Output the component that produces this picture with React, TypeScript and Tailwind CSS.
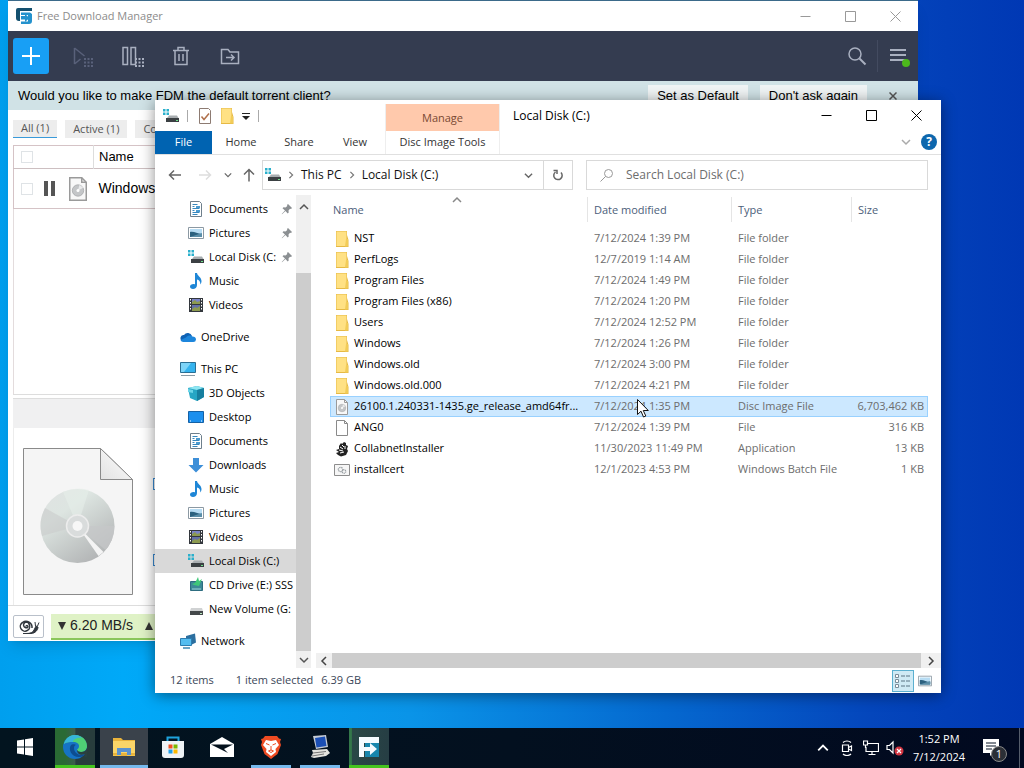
import type { ReactNode } from 'react'
import clsx from 'clsx'

type IconProps = { className?: string }

function FdmLogo({ className }: IconProps) {
  return (
    <svg viewBox="0 0 16 16" className={className}>
      <path d="M2 0h14v3H4v10H3a3 3 0 0 1-3-3V2a2 2 0 0 1 2-2z" fill="#14506f" />
      <path d="M5 4.500h9l2 1.500v7a3 3 0 0 1-3 3H5v-2.500h7V7H5z" fill="#2492cd" />
      <path d="M5 8h4V6l4.500 4L9 14v-2.500H5z" fill="#2492cd" />
    </svg>
  )
}

function DriveIcon({ className }: IconProps) {
  return (
    <svg viewBox="0 0 16 16" className={className}>
      <path d="M0 1h2.500v2.500H0zM3.500 1H6v2.500H3.500zM0 4.500h2.500V7H0zM3.500 4.500H6V7H3.500z" fill="#2ab0cc" />
      <path d="M4 10l2-2.500h8l1.500 2.500z" fill="#a8adb0" />
      <path d="M3 10h13v4H3z" fill="#3b4043" />
      <path d="M13 12h2v1h-2z" fill="#6fe08a" />
    </svg>
  )
}

function VolumeIcon({ className }: IconProps) {
  return (
    <svg viewBox="0 0 16 16" className={className}>
      <path d="M3 7h11l1 3H2z" fill="#d0d2d3" />
      <path d="M2 10h13v4H2z" fill="#44484a" />
      <path d="M12 12h2v1h-2z" fill="#b9e8c0" />
    </svg>
  )
}

function DocumentsIcon({ className }: IconProps) {
  return (
    <svg viewBox="0 0 16 16" className={className}>
      <path d="M2.500.5h9l2 2v13h-11z" fill="#fff" stroke="#6e7f8c" />
      <path d="M4.500 3.500h5M4.500 5.500h2M4.500 7.500h7M4.500 9.500h2M4.500 11.500h7M4.500 13.500h5" stroke="#3787bd" />
      <path d="M8 5h4v2H8zM8 9h4v2H8z" fill="#4b9bd0" />
    </svg>
  )
}

function PicturesIcon({ className }: IconProps) {
  return (
    <svg viewBox="0 0 16 16" className={className}>
      <path d="M.5 2.500h15v11H.5z" fill="#fff" stroke="#8c99a3" />
      <path d="M2 4h12v8H2z" fill="#b7dcf3" />
      <path d="M2 7c4-1 7 2 12 2v3H2z" fill="#2c617f" />
      <path d="M8 10l6-2v4H2z" fill="#5b8ea8" />
    </svg>
  )
}

function MusicIcon({ className }: IconProps) {
  return (
    <svg viewBox="0 0 16 16" className={className}>
      <path d="M7 0h2c.3 3 4.500 4 4.500 8 0 1.500-.5 2.500-1.200 3.500.3-3-1.300-4.500-3.300-5V12c0 2.500-2 4-4 4s-3-1-3-2.500S3.500 11 5.500 11c.6 0 1 .1 1.500.4z" fill="#1f86d6" />
    </svg>
  )
}

function VideosIcon({ className }: IconProps) {
  return (
    <svg viewBox="0 0 16 16" className={className}>
      <path d="M1 1h14v14H1z" fill="#33373d" />
      <path d="M4 2h8v5H4z" fill="#7a83c8" />
      <path d="M4 8h8v6H4z" fill="#6470a8" />
      <path d="M4 5l3-2 2 2 3-1v3H4zM4 12l3-2 2 1 3-2v5H4z" fill="#8c9a50" />
      <path d="M2.500 2v12M13.500 2v12" stroke="#fff" strokeDasharray="1.500 1.500" />
    </svg>
  )
}

function OneDriveIcon({ className }: IconProps) {
  return (
    <svg viewBox="0 0 16 16" className={className}>
      <path d="M4 6a4.500 4.500 0 0 1 8 1l-6 5H3a3 3 0 0 1 1-6z" fill="#0f62b5" />
      <path d="M6 8.500c2-2.500 5-2.500 6.500-1 2 0 3.500 1.200 3.500 3A2.700 2.700 0 0 1 13.300 13H3.200A3.200 3.200 0 0 1 .5 11z" fill="#1d86dc" />
    </svg>
  )
}

function ThisPcIcon({ className }: IconProps) {
  return (
    <svg viewBox="0 0 16 16" className={className}>
      <path d="M.5 1.500h15v10H.5z" fill="#35b3ee" stroke="#2a6e93" />
      <path d="M1 2h10L4 11H1z" fill="#7dd4f8" />
      <path d="M1 14.500h14" stroke="#8a9aa4" />
    </svg>
  )
}

function ObjectsIcon({ className }: IconProps) {
  return (
    <svg viewBox="0 0 16 16" className={className}>
      <path d="M0 3l9-2 7 2v9l-7 4-7-3z" fill="#26a6c4" />
      <path d="M0 3l9-2 7 2-7 2z" fill="#8fe6f2" />
      <path d="M9 5l7-2v9l-7 4z" fill="#167f9f" />
      <path d="M0 4l5 1v3L0 7z" fill="#6ad5e8" />
    </svg>
  )
}

function DesktopIcon({ className }: IconProps) {
  return (
    <svg viewBox="0 0 16 16" className={className}>
      <path d="M.5 2.500h15v11H.5z" fill="#1b8fee" stroke="#1561a5" />
      <path d="M2 12h1M13 12h1" stroke="#fff" />
    </svg>
  )
}

function DownloadsIcon({ className }: IconProps) {
  return (
    <svg viewBox="0 0 16 16" className={className}>
      <path d="M5 1h6v7h4.500L8 15.500.5 8H5z" fill="#3d8fd8" />
    </svg>
  )
}

function CdDriveIcon({ className }: IconProps) {
  return (
    <svg viewBox="0 0 16 16" className={className}>
      <path d="M2.500 4.500h12v9h-12z" fill="#3d8a96" stroke="#2d6d80" />
      <path d="M4 7l3-1 3-6 1 4 3-2-3 7-5-1z" fill="#3fc878" />
      <path d="M4 12h9" stroke="#9fd3da" />
    </svg>
  )
}

function NetworkIcon({ className }: IconProps) {
  return (
    <svg viewBox="0 0 16 16" className={className}>
      <path d="M6 3l9-2.500 1 9L11 12H6z" fill="#2c6f9f" />
      <path d="M.5 5.500h11v7H.5z" fill="#55bdf0" stroke="#2d7db0" />
      <path d="M3 15h7" stroke="#3c87b3" strokeWidth="1.500" />
    </svg>
  )
}

function FolderIcon({ className }: IconProps) {
  return (
    <svg viewBox="0 0 16 16" className={className}>
      <path d="M2 0h11v4l1.500 5v7H2z" fill="#e6b944" />
      <path d="M2.500.5H12.500V15H2.500z" fill="#ffe184" />
      <path d="M12 8h2v7.500h-3z" fill="#f2cc58" />
    </svg>
  )
}

function PageIcon({ className }: IconProps) {
  return (
    <svg viewBox="0 0 16 16" className={className}>
      <path d="M2.500.5h8l3 3v12h-11z" fill="#fff" stroke="#8a8a8a" />
      <path d="M10.500.5v3h3" fill="none" stroke="#8a8a8a" />
    </svg>
  )
}

function DiscIcon({ className }: IconProps) {
  return (
    <svg viewBox="0 0 16 16" className={className}>
      <path d="M2.500.5h8l3 3v12h-11z" fill="#f8f8f8" stroke="#9a9a9a" />
      <path d="M10.500.5v3h3" fill="none" stroke="#9a9a9a" />
      <circle cx="8" cy="9" r="3.800" fill="#c4c6c8" stroke="#a4a6a8" strokeWidth=".5" />
      <path d="M8 9l1-3.800 2.500 2z" fill="#e9eaeb" />
      <circle cx="8" cy="9" r="1" fill="#fff" />
    </svg>
  )
}

function CollabIcon({ className }: IconProps) {
  return (
    <svg viewBox="0 0 16 16" className={className}>
      <path d="M5 5l2-3 1 1 2-2 2 1v2l2 1-1 3 1 2-2 4-5 1.500L4 14l-2-2 3-1-3-2 3-1z" fill="#222" />
      <path d="M6 6l3 2M5 9l4 1M8 4l2 2M6 12l4-1M11 5v3" stroke="#fff" />
    </svg>
  )
}

function BatchIcon({ className }: IconProps) {
  return (
    <svg viewBox="0 0 16 16" className={className}>
      <path d="M.5 2.500h15v11H.5z" fill="#f6f6f6" stroke="#8d8d8d" />
      <circle cx="6.500" cy="7.500" r="2.200" fill="none" stroke="#9aa0a4" strokeWidth="1.300" strokeDasharray="1.400 .6" />
      <circle cx="10" cy="9.500" r="1.800" fill="none" stroke="#9aa0a4" strokeWidth="1.200" strokeDasharray="1.200 .5" />
    </svg>
  )
}

function PinIcon({ className }: IconProps) {
  return (
    <svg viewBox="0 0 12 12" className={className}>
      <path d="M7 1l4 4-1 1-1-.3L7.500 7.500l.2 2-1 1L4.500 8 1 11.300.7 11 4 7.500 1.500 5.300l1-1 2 .2L6.300 3 6 2z" fill="#8b8f92" />
    </svg>
  )
}

function Chevron({ className, d = 'M1 3l4 4 4-4' }: IconProps & { d?: string }) {
  return (
    <svg viewBox="0 0 10 10" fill="none" stroke="currentColor" strokeWidth="1.500" className={className}>
      <path d={d} />
    </svg>
  )
}

const UP = 'M1 7l4-4 4 4'
const LEFT = 'M7 1L3 5l4 4'
const RIGHT = 'M3 1l4 4-4 4'

function WindowButtons({ className }: IconProps) {
  const shapes = [
    { label: 'Minimize', d: 'M.5 5.500h10' },
    { label: 'Maximize', d: 'M.5.5h10v10H.5z' },
    { label: 'Close', d: 'M.5.5l10 10M10.500.5l-10 10' },
  ]
  return (
    <div className={clsx('flex h-[30px]', className)}>
      {shapes.map(({ label, d }) => (
        <button key={label} aria-label={label} className="grid w-[45px] place-items-center">
          <svg viewBox="0 0 11 11" fill="none" stroke="currentColor" className="size-[11px]">
            <path d={d} />
          </svg>
        </button>
      ))}
    </div>
  )
}

function DiscPreview() {
  return (
    <svg viewBox="0 0 110 147" className="h-[147px] w-[110px] shrink-0">
      <defs>
        <linearGradient id="disc" x1="0" y1="0" x2=".7" y2="1">
          <stop offset="0" stopColor="#e0e2e2" />
          <stop offset=".35" stopColor="#dde5e1" />
          <stop offset="1" stopColor="#b2b4b5" />
        </linearGradient>
        <linearGradient id="fold" x1="0" y1="1" x2="1" y2="0">
          <stop offset="0" stopColor="#e2e2e2" />
          <stop offset="1" stopColor="#fff" />
        </linearGradient>
      </defs>
      <path d="M.5.5h77l32 31v115H.5z" fill="#f5f5f5" stroke="#8a8a8a" />
      <path d="M77.500.5v31h32z" fill="url(#fold)" stroke="#8a8a8a" />
      <circle cx="54.500" cy="78" r="37" fill="url(#disc)" />
      <path d="M54.500 78L22 60a37 37 0 0 0-3 28z" fill="#c9cbcc" opacity=".6" />
      <path d="M54.500 78h37a37 37 0 0 1-9 24z" fill="#c6c8c9" opacity=".7" />
      <path d="M54.500 78l26 26-5 4z" fill="#f4f4f4" />
      <path d="M54.500 78L40 44a37 37 0 0 1 26-2z" fill="#e6efea" opacity=".6" />
      <circle cx="54.500" cy="78" r="11" fill="#d9dcdc" stroke="#ececec" strokeWidth="1.500" />
      <circle cx="54.500" cy="78" r="5" fill="#f7f7f7" />
    </svg>
  )
}

function ToolButton({ label, className, children }: { label: string; className?: string; children: ReactNode }) {
  return (
    <button aria-label={label} className={clsx('grid size-9 place-items-center', className)}>
      <svg viewBox="0 0 24 24" fill="none" stroke="currentColor" strokeWidth="1.500" className="size-6">
        {children}
      </svg>
    </button>
  )
}

function DownloadManager() {
  return (
    <section className="absolute top-0 right-[106px] bottom-[87px] left-2 flex flex-col border-t border-[#3b6a8a] bg-white font-['Liberation_Sans',sans-serif] shadow-lg">
      <header className="flex h-[30px] shrink-0 items-center pl-2">
        <FdmLogo className="size-4" />
        <h1 className="ml-[5px] grow font-['Open_Sans',sans-serif] text-[11px] text-[#8c8c8c]">Free Download Manager</h1>
        <WindowButtons className="text-[#999]" />
      </header>

      <div className="flex h-[50px] shrink-0 items-center bg-[#343c50] pr-[2px] pl-[5px] text-[#a9b0c0]">
        <button aria-label="Add download" className="grid size-9 place-items-center rounded-[3px] bg-[#189ff5] text-white">
          <svg viewBox="0 0 18 18" stroke="currentColor" strokeWidth="2" className="size-[18px]">
            <path d="M9 0v18M0 9h18" />
          </svg>
        </button>
        <div className="ml-4 flex grow gap-[13px]">
          <ToolButton label="Start all" className="text-[#59617a]">
            <path d="M3.500 4v16M3.500 4l10 8M3.500 20l6-5" />
            <path d="M13 15h10M13 18.500h10M13 22h10" strokeWidth="2" strokeDasharray="2 1.500" />
          </ToolButton>
          <ToolButton label="Pause all">
            <path d="M3 3.500h4.500v17H3zM11 3.500h4.500v17H11z" />
            <path d="M15 15h9M15 18.500h9M15 22h9" strokeWidth="2" strokeDasharray="2 1.500" />
          </ToolButton>
          <ToolButton label="Delete">
            <path d="M4 6.500h16M9 6V3.500h6V6M6 7v13.500h12V7M10 10v7M14 10v7" />
          </ToolButton>
          <ToolButton label="Move to folder">
            <path d="M3.500 19.500v-14H10l2 2.500h8.500v11.500zM8 13.500h8M13 10.500l3 3-3 3" />
          </ToolButton>
        </div>
        <ToolButton label="Search">
          <circle cx="10" cy="10" r="6" />
          <path d="M14.500 14.500l6 6" strokeWidth="2" />
        </ToolButton>
        <div className="ml-[2px] h-8 w-px bg-[#434b60]" />
        <button aria-label="Menu" className="ml-[2px] grid size-9 place-items-center">
          <svg viewBox="0 0 24 24" className="size-6">
            <path d="M4 6h16M4 11h16M4 16h16" stroke="currentColor" strokeWidth="2" />
            <circle cx="20" cy="19" r="4" fill="#4cb81c" />
          </svg>
        </button>
      </div>

      <div className="flex h-[29px] shrink-0 items-center bg-[#d0e2e6] pr-[13px] pl-[10px] text-[13px]">
        <p className="grow">Would you like to make FDM the default torrent client?</p>
        <button className="h-[22px] bg-[#f0f4f5] px-[9px]">Set as Default</button>
        <button className="ml-3 h-[22px] bg-[#f0f4f5] px-[9px]">Don't ask again</button>
        <button aria-label="Dismiss" className="ml-[14px] grid w-6 place-items-center text-[#555]">
          <svg viewBox="0 0 8 8" stroke="currentColor" strokeWidth="1.500" className="size-2">
            <path d="M.5.5l7 7M7.500.5l-7 7" />
          </svg>
        </button>
      </div>

      <div className="mt-[10px] ml-[5px] flex gap-2 font-['Open_Sans',sans-serif] text-[11px] text-[#555]">
        <button className="h-[18px] border-b border-[#3a9ad9] bg-[#ededed] px-2">All (1)</button>
        <button className="h-[18px] bg-[#ededed] px-2">Active (1)</button>
        <button className="h-[18px] w-20 bg-[#ededed] px-2 text-left">Co</button>
      </div>

      <table className="mt-[7px] ml-[5px] table-fixed border border-[#d5c3c6] text-[14px]">
        <thead>
          <tr className="h-[23px] border-b border-[#cdbfc1] text-left">
            <th className="w-20 py-0 pl-[7px]">
              <input type="checkbox" aria-label="Select all" className="block size-3 appearance-none border border-[#dfe3e6]" />
            </th>
            <th className="border-l border-[#ddd] py-0 pl-[5px] text-[13px] font-normal">Name</th>
          </tr>
        </thead>
        <tbody>
          <tr className="h-10">
            <td className="pl-[7px]">
              <div className="flex items-center">
                <input type="checkbox" aria-label="Select Windows" className="size-3 appearance-none border border-[#dfe3e6]" />
                <button aria-label="Pause" className="ml-[11px] flex gap-[3px]">
                  <span className="h-[15px] w-1 bg-[#555]" />
                  <span className="h-[15px] w-1 bg-[#555]" />
                </button>
                <DiscIcon className="ml-[11px] size-6" />
              </div>
            </td>
            <td className="pl-[5px]">Windows</td>
          </tr>
        </tbody>
      </table>

      <div className="ml-[5px] grow border-l border-[#e3dcdd]" />
      <div className="mx-[5px] h-[5px] border-y border-[#ddd]" />
      <div className="mx-[5px] h-[29px] bg-[#f0f0f1]" />
      <div className="ml-[5px] flex h-[177px] items-center gap-5 border-l border-[#ececec] pt-[10px] pl-[9px]">
        <DiscPreview />
        <div className="flex h-full flex-col gap-16 pt-[40px]">
          <span className="size-3 border border-[#3a8ad0]" />
          <span className="size-3 border border-[#3a8ad0]" />
        </div>
      </div>
      <footer className="flex h-9 shrink-0 items-center border-t border-[#ddd] pt-[6px] pl-[5px]">
        <button aria-label="Snail mode" className="grid h-[23px] w-[31px] place-items-center rounded-[2px] border border-[#b9c0ca]">
          <svg viewBox="0 0 22 16" fill="none" stroke="#30363d" strokeWidth="1.500" className="h-4 w-[22px]">
            <path d="M8 7.500a1 1 0 1 1 1.500 1A2.800 2.800 0 1 1 11 5 4.700 4.700 0 1 1 4.500 3.500 6 6 0 0 1 14 9" />
            <path d="M5 14.500c6 0 9 0 11-3.500l2-4 2 1c0 3-3 6.500-7 6.500zM17.500 7l-.5-4M19.500 7l1.500-3.500" fill="#30363d" strokeWidth="1" />
          </svg>
        </button>
        <div className="ml-[7px] flex h-[26px] grow items-center border-b-2 border-[#8ac65a] bg-[#dff2c6] pl-[7px] text-[14px] text-[#222]">
          <svg viewBox="0 0 8 8" className="size-2"><path d="M0 0h8L4 8z" fill="#333" /></svg>
          <span className="ml-1">6.20 MB/s</span>
          <svg viewBox="0 0 8 8" className="ml-3 size-2"><path d="M0 8h8L4 0z" fill="#333" /></svg>
        </div>
      </footer>
    </section>
  )
}

type NavItem = { label: string; icon: (p: IconProps) => ReactNode; root?: boolean; pinned?: boolean; active?: boolean }

const navGroups: NavItem[][] = [
  [
    { label: 'Documents', icon: DocumentsIcon, pinned: true },
    { label: 'Pictures', icon: PicturesIcon, pinned: true },
    { label: 'Local Disk (C:', icon: DriveIcon, pinned: true },
    { label: 'Music', icon: MusicIcon },
    { label: 'Videos', icon: VideosIcon },
  ],
  [{ label: 'OneDrive', icon: OneDriveIcon, root: true }],
  [
    { label: 'This PC', icon: ThisPcIcon, root: true },
    { label: '3D Objects', icon: ObjectsIcon },
    { label: 'Desktop', icon: DesktopIcon },
    { label: 'Documents', icon: DocumentsIcon },
    { label: 'Downloads', icon: DownloadsIcon },
    { label: 'Music', icon: MusicIcon },
    { label: 'Pictures', icon: PicturesIcon },
    { label: 'Videos', icon: VideosIcon },
    { label: 'Local Disk (C:)', icon: DriveIcon, active: true },
    { label: 'CD Drive (E:) SSS', icon: CdDriveIcon },
    { label: 'New Volume (G:', icon: VolumeIcon },
  ],
  [{ label: 'Network', icon: NetworkIcon, root: true }],
]

const files = [
  { name: 'NST', date: '7/12/2024 1:39 PM', type: 'File folder', size: '', icon: FolderIcon },
  { name: 'PerfLogs', date: '12/7/2019 1:14 AM', type: 'File folder', size: '', icon: FolderIcon },
  { name: 'Program Files', date: '7/12/2024 1:49 PM', type: 'File folder', size: '', icon: FolderIcon },
  { name: 'Program Files (x86)', date: '7/12/2024 1:20 PM', type: 'File folder', size: '', icon: FolderIcon },
  { name: 'Users', date: '7/12/2024 12:52 PM', type: 'File folder', size: '', icon: FolderIcon },
  { name: 'Windows', date: '7/12/2024 1:26 PM', type: 'File folder', size: '', icon: FolderIcon },
  { name: 'Windows.old', date: '7/12/2024 3:00 PM', type: 'File folder', size: '', icon: FolderIcon },
  { name: 'Windows.old.000', date: '7/12/2024 4:21 PM', type: 'File folder', size: '', icon: FolderIcon },
  { name: '26100.1.240331-1435.ge_release_amd64fr...', date: '7/12/2024 1:35 PM', type: 'Disc Image File', size: '6,703,462 KB', icon: DiscIcon, selected: true },
  { name: 'ANG0', date: '7/12/2024 1:39 PM', type: 'File', size: '316 KB', icon: PageIcon },
  { name: 'CollabnetInstaller', date: '11/30/2023 11:49 PM', type: 'Application', size: '13 KB', icon: CollabIcon },
  { name: 'installcert', date: '12/1/2023 4:53 PM', type: 'Windows Batch File', size: '1 KB', icon: BatchIcon },
]

function FileTable() {
  return (
    <table className="w-full table-fixed">
      <colgroup>
        <col />
        <col className="w-36" />
        <col className="w-[120px]" />
        <col className="w-[77px]" />
      </colgroup>
      <thead className="text-left text-[#4c607a]">
        <tr>
          {['Name', 'Date modified', 'Type', 'Size'].map((title, i) => (
            <th key={title} className="p-0 pb-[6px] font-normal">
              <div className={clsx('relative h-[25px] leading-[25px]', i === 0 ? 'pl-[3px]' : 'border-l border-[#e5e5e5] pl-[6px]')}>
                {title}
                {i === 0 && <Chevron d={UP} className="absolute -top-[2px] left-[122px] size-[10px] text-[#888]" />}
              </div>
            </th>
          ))}
        </tr>
      </thead>
      <tbody className="text-[#6d6d6d]">
        {files.map((file) => (
          <tr key={file.name} className={clsx('h-[21px]', file.selected && 'bg-[#cce8ff] outline -outline-offset-1 outline-[#99d1ff]')}>
            <td className="p-0 pl-1">
              <div className="flex items-center gap-1 whitespace-nowrap text-black">
                <file.icon className="size-4 shrink-0" />
                {file.name}
              </div>
            </td>
            <td className="p-0 pl-[7px] whitespace-nowrap">{file.date}</td>
            <td className="p-0 pl-[7px] whitespace-nowrap">{file.type}</td>
            <td className="p-0 pr-1 text-right whitespace-nowrap">{file.size}</td>
          </tr>
        ))}
      </tbody>
    </table>
  )
}

function Explorer() {
  return (
    <section className="absolute top-[100px] right-[83px] bottom-[35px] left-[155px] flex flex-col overflow-hidden bg-white text-[11px] shadow-[0_2px_14px_rgba(0,0,0,0.45)]">
      <div className="flex h-[55px] shrink-0 border-b border-[#e0e0e0]">
        <div className="w-[230px]">
          <div className="flex h-[31px] items-center pl-2">
            <DriveIcon className="size-4" />
            <span className="ml-2 h-3 w-px bg-[#aaa]" />
            <svg viewBox="0 0 16 16" className="ml-[9px] size-4">
              <path d="M2.500.5h9l2 2v13h-11z" fill="#fff" stroke="#8d7b72" />
              <path d="M4.500 8.500l2.500 3 5-6" fill="none" stroke="#b0714c" strokeWidth="1.500" />
            </svg>
            <FolderIcon className="ml-[6px] size-4" />
            <svg viewBox="0 0 8 8" className="ml-[7px] size-2">
              <path d="M0 1.500h8" stroke="#222" />
              <path d="M0 4h8L4 8z" fill="#222" />
            </svg>
            <span className="ml-2 h-3 w-px bg-[#aaa]" />
          </div>
          <nav className="flex h-[23px] text-[#333]">
            <button className="w-[57px] bg-[#0063b1] text-white">File</button>
            <button className="w-[58px]">Home</button>
            <button className="w-[58px]">Share</button>
            <button className="w-[54px]">View</button>
          </nav>
        </div>
        <div className="mt-1 w-[115px] border-x border-[#eee] text-center text-[#333]">
          <div className="h-[27px] bg-[#ffc9ac] leading-7 text-[#7a4a33]">Manage</div>
          <button className="h-[23px] w-full whitespace-nowrap">Disc Image Tools</button>
        </div>
        <h2 className="ml-[13px] grow text-[12px] leading-[31px]">Local Disk (C:)</h2>
        <div className="flex flex-col">
          <WindowButtons className="mr-[2px]" />
          <div className="flex h-6 items-center justify-end gap-[10px] pr-1">
            <Chevron className="size-[10px] text-[#aaa]" />
            <button aria-label="Help" className="size-4 rounded-full bg-[#0d67ad] text-center text-[12px] leading-4 font-bold text-white">?</button>
          </div>
        </div>
      </div>

      <div className="flex h-10 shrink-0 items-center px-[13px] text-[12px] text-[#666]">
        <svg viewBox="0 0 14 14" fill="none" stroke="currentColor" strokeWidth="1.500" className="size-[14px]">
          <path d="M13 7H1.500M6 2.500L1.500 7 6 11.500" />
        </svg>
        <svg viewBox="0 0 14 14" fill="none" stroke="#ddd" strokeWidth="1.500" className="ml-4 size-[14px]">
          <path d="M1 7h11.500M8 2.500L12.500 7 8 11.500" />
        </svg>
        <Chevron className="ml-3 size-2" />
        <svg viewBox="0 0 14 14" fill="none" stroke="currentColor" strokeWidth="1.500" className="ml-[10px] size-[14px]">
          <path d="M7 13.500V1.500M2 6.500l5-5 5 5" />
        </svg>
        <div className="ml-[6px] flex h-[30px] w-[311px] items-center border border-[#d9d9d9] pl-[2px] text-[#111]">
          <DriveIcon className="size-4" />
          <Chevron d={RIGHT} className="mx-[6px] size-2 text-[#777]" />
          This PC
          <Chevron d={RIGHT} className="mx-[6px] size-2 text-[#777]" />
          <span className="grow">Local Disk (C:)</span>
          <Chevron className="mr-[10px] size-[9px] text-[#666]" />
          <button aria-label="Refresh" className="grid h-full w-[29px] place-items-center border-l border-[#d9d9d9] text-[#666]">
            <svg viewBox="0 0 12 12" fill="none" stroke="currentColor" strokeWidth="1.500" className="size-3">
              <path d="M9 3.500A4.200 4.200 0 1 1 3.500 3M1.500 1.500H5v3.500" />
            </svg>
          </button>
        </div>
        <label className="ml-[13px] flex h-[30px] grow items-center border border-[#d9d9d9] pl-[13px]">
          <svg viewBox="0 0 14 14" fill="none" stroke="#999" className="size-[14px]">
            <circle cx="8.500" cy="5.500" r="4" />
            <path d="M5.500 8.500l-5 5" />
          </svg>
          <input aria-label="Search" placeholder="Search Local Disk (C:)" className="ml-3 min-w-0 grow outline-none placeholder:text-[#6d6d6d]" />
        </label>
      </div>

      <div className="flex min-h-0 grow">
        <nav className="flex w-[141px] shrink-0 flex-col gap-2 overflow-hidden pt-[2px]">
          {navGroups.map((group, i) => (
            <div key={i}>
              {group.map((item) => (
                <a
                  key={item.label}
                  href="#"
                  className={clsx('flex h-6 items-center gap-[5px] whitespace-nowrap', item.root ? 'pl-[25px]' : 'pl-[33px]', item.active && 'bg-[#d9d9d9]')}
                >
                  <item.icon className="size-4 shrink-0" />
                  <span className="grow">{item.label}</span>
                  {item.pinned && <PinIcon className="mr-[3px] size-3 shrink-0" />}
                </a>
              ))}
            </div>
          ))}
        </nav>
        <div className="flex w-[15px] shrink-0 flex-col bg-[#f0f0f0]">
          <button aria-label="Scroll up" className="grid h-[78px] justify-center pt-[7px] text-[#555]">
            <Chevron d={UP} className="size-[10px]" />
          </button>
          <div className="grow bg-[#cdcdcd]" />
          <button aria-label="Scroll down" className="grid h-[17px] place-items-center text-[#555]">
            <Chevron className="size-[10px]" />
          </button>
        </div>
        <main className="flex min-w-0 grow flex-col pt-[2px]">
          <div className="grow pr-[13px] pl-[19px]">
            <FileTable />
          </div>
          <div className="ml-[5px] flex h-[15px] shrink-0 bg-[#f0f0f0] text-[#444]">
            <button aria-label="Scroll left" className="grid w-4 place-items-center">
              <Chevron d={LEFT} className="size-[10px]" />
            </button>
            <div className="grow bg-[#cdcdcd]" />
            <button aria-label="Scroll right" className="grid w-5 place-items-center">
              <Chevron d={RIGHT} className="size-[10px]" />
            </button>
          </div>
        </main>
      </div>

      <footer className="flex h-[25px] shrink-0 items-center pl-[15px] text-[#3a4658]">
        <span>12 items</span>
        <span className="ml-[22px]">1 item selected</span>
        <span className="ml-2 grow">6.39 GB</span>
        <button aria-label="Details view" className="grid size-[22px] place-items-center border border-[#5bb0d0] bg-[#cfeaf5]">
          <svg viewBox="0 0 16 14" className="h-[14px] w-4">
            <path d="M.5.5h3v3h-3zM.5 5.500h3v3h-3zM.5 10.500h3v3h-3z" fill="#fff" stroke="#7a8c99" />
            <path d="M6 2h10M6 7h10M6 12h10" stroke="#5a7484" strokeDasharray="4 1" />
          </svg>
        </button>
        <button aria-label="Large icons view" className="mr-[9px] ml-1">
          <PicturesIcon className="size-[14px]" />
        </button>
      </footer>
    </section>
  )
}

function Task({ label, tint, bar, wide, children }: { label: string; tint?: string; bar?: string; wide?: boolean; children: ReactNode }) {
  return (
    <button aria-label={label} className="flex h-10 w-[49px] justify-center">
      <span className={clsx('flex h-full flex-col items-center', wide ? 'w-12' : 'w-10', tint)}>
        <span className="grid w-full grow place-items-center">
          <svg viewBox="0 0 24 24" className="size-6">
            {children}
          </svg>
        </span>
        <span className={clsx('h-[3px] w-full', bar)} />
      </span>
    </button>
  )
}

function Taskbar() {
  return (
    <footer className="flex h-10 shrink-0 items-center bg-[linear-gradient(90deg,#02141f,#03101f_50%,#010920)] pl-px font-['Open_Sans',sans-serif] text-[11px] text-white">
      <Task label="Start">
        <path d="M3 5.500l7-1v7H3zM11 4.300l8-1.300v8.500h-8zM3 12.500h7v7l-7-1zM11 12.500h8V21l-8-1.300z" fill="#fff" />
      </Task>
      <Task label="Edge" tint="bg-[linear-gradient(90deg,#2a6a34_25%,#3c5d4c_50%,#283d3c_52%)]" bar="bg-[#45c41e]">
        <circle cx="12" cy="12" r="12" fill="#1673c4" />
        <path d="M1 9C3 2 8 0 12 0c7 0 12 5 12 11 0 4-3 6-6 6-2 0-4-1-4-2s2-1 2-4c0-2-2-4-6-4-3 0-7 0-9 2z" fill="#4fcf75" />
        <path d="M1 9C3 2 8 0 12 0c3 0 5 1 7 3-4-1-9 1-9 4-3 0-7 0-9 2z" fill="#36b5d8" />
        <path d="M8 10c-3 4 0 12 8 12 3 0 5-1 6-3-5 3-11-1-11-6 0-2 1-3 2-3-1-1-4-1-5 0z" fill="#0d4d90" />
        <path d="M14 15c1 1 2 2 4 2s5-1 6-4v9h-3l1-3c-4 2-8 0-8-4z" fill="#2a403f" />
      </Task>
      <Task label="File Explorer" wide tint="bg-[#3a424b]" bar="bg-[#76b9ed]">
        <path d="M1 3h8l2 2h12v16H1z" fill="#e9b33c" />
        <path d="M1 6h22v12H1z" fill="#fbd568" />
        <path d="M5 13h14v8h-4v-4H9v4H5z" fill="#5b92cf" />
        <path d="M1 20.500h8M15 20.500h8" stroke="#f5c64b" />
      </Task>
      <Task label="Microsoft Store">
        <path d="M6.500 6V2.500h11V6" fill="none" stroke="#1ea3dd" strokeWidth="2" />
        <path d="M1 6h22v14a3 3 0 0 1-3 3H4a3 3 0 0 1-3-3z" fill="#eef2f5" />
        <path d="M7.500 9.500h4v4h-4z" fill="#f05022" />
        <path d="M12.500 9.500h4v4h-4z" fill="#7db800" />
        <path d="M7.500 14.500h4v4h-4z" fill="#1e9fe8" />
        <path d="M12.500 14.500h4v4h-4z" fill="#fdb900" />
      </Task>
      <Task label="Mail">
        <path d="M0 9L12 2l12 7v13H0z" fill="#fff" />
        <path d="M1 9.500h22L14 14l4 4-7-3.500z" fill="#03101c" />
      </Task>
      <Task label="Brave" bar="bg-[#76b9ed]">
        <path d="M6 1h12l2 2.500 2 .5-1 3 1 3-3.500 9L12 24l-6.500-5L2 10l1-3-1-3 2-.5z" fill="#ee4b22" />
        <path d="M7 5l5 1 5-1 3 5-3.500 4 .5 3-5 4-5-4 .5-3L4 10z" fill="#fff" />
        <path d="M7 8.500l3.500 1.500M17 8.500L13.500 10M12 11v4M9.500 16l2.500-1 2.500 1-2.500 1.500z" stroke="#ee4b22" fill="none" />
      </Task>
      <Task label="Remote session" bar="bg-[#76b9ed]">
        <path d="M5 1l13-1 2 12-12 2z" fill="#c5ccd5" />
        <path d="M7 3l10-1.500 1.500 9.500-10 1.500z" fill="#1b4fb5" />
        <path d="M4 15l15-1 3 4-4 3-12 2-3-1 2-4z" fill="#e4e4df" />
        <path d="M5 18l13-1.500M4 21l12-2" stroke="#777" />
      </Task>
      <Task label="Free Download Manager" tint="bg-[linear-gradient(90deg,#34784a_6%,#294846_8%,#263e44)]" bar="bg-[#45c41e]">
        <path d="M2 2h20v6H7v14H2z" fill="#f4fbff" />
        <path d="M8 8h14v14H8z" fill="#1786ad" />
        <path d="M2 12h11V8l7 6-7 6v-4H2z" fill="#f4fbff" />
      </Task>

      <div className="ml-auto flex h-full items-center">
        <Chevron d={UP} className="size-3" />
        <svg viewBox="0 0 16 16" fill="none" stroke="currentColor" strokeWidth="1.200" className="ml-[10px] size-4">
          <path d="M3.500 5h6v6.500h-6zM9.500 7.500l3-1.500v4.500l-3-1.500M4 2.500c2-2 6-2 8 0M4 14c2 2 6 2 8 0" />
        </svg>
        <svg viewBox="0 0 16 16" fill="none" stroke="currentColor" strokeWidth="1.200" className="ml-2 size-4">
          <path d="M5 3.500h10.500v8H3V7M.5 1h4v4h-4zM2.500 5v3M9 11.500V14M5.500 14.500h7" />
        </svg>
        <svg viewBox="0 0 18 16" fill="none" stroke="currentColor" strokeWidth="1.200" className="ml-[7px] h-4 w-[18px]">
          <path d="M1 5.500h2.500L7 2v11L3.500 9.500H1z" />
          <circle cx="13" cy="11" r="4.500" fill="#d13440" stroke="none" />
          <path d="M11 9l4 4M15 9l-4 4" />
        </svg>
        <div className="ml-[5px] w-[60px] text-center leading-[18px]">
          <p className="whitespace-nowrap">1:52 PM</p>
          <p className="whitespace-nowrap">7/12/2024</p>
        </div>
        <button aria-label="Notifications" className="relative ml-3 h-6 w-7">
          <svg viewBox="0 0 28 24" className="h-6 w-7">
            <path d="M2 3h16v14h-6l-3 3v-3H2z" fill="#fff" />
            <path d="M5 7h10M5 10h10M5 13h6" stroke="#071225" />
          </svg>
          <span className="absolute top-[10px] left-[10px] size-4 rounded-full border border-[#888] bg-[#2b2f36] text-center text-[11px] leading-[14px]">1</span>
        </button>
        <span className="mr-1 ml-[10px] h-full w-px bg-[#555d6b]" />
      </div>
    </footer>
  )
}

export default function App() {
  return (
    <div className="flex h-screen min-h-[700px] flex-col bg-[linear-gradient(90deg,#009fee,#00a9f8_12%,#0a94e8_40%,#0568cf_65%,#0446bc_85%,#0038b4)] font-['Open_Sans',sans-serif]">
      <div className="relative grow overflow-hidden">
        <DownloadManager />
        <Explorer />
        <svg viewBox="0 0 12 19" className="absolute top-[399px] left-[637px] h-[19px] w-3">
          <path d="M.5.5v15l3.500-3.300 2.500 5.800 2.300-1-2.500-5.500h5z" fill="#fff" stroke="#111" />
        </svg>
      </div>
      <Taskbar />
    </div>
  )
}
